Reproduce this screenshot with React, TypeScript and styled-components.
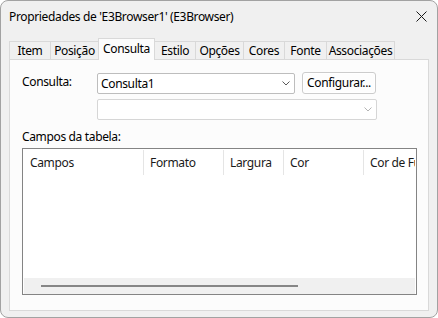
import React from "react";
import styled, { createGlobalStyle } from "styled-components";

const Global = createGlobalStyle`
  html, body { margin: 0; padding: 0; background: #ffffff; }
  body {
    font-family: "Noto Sans", "Open Sans", sans-serif;
    font-size: 12px;
    letter-spacing: -0.35px;
    color: #000;
  }
  * { box-sizing: border-box; }
`;

const Window = styled.div`
  width: 438px;
  height: 318px;
  border: 1px solid #a2a2a2;
  border-radius: 8px;
  background: #f0f0f0;
  display: flex;
  flex-direction: column;
  overflow: hidden;
`;

const TitleBar = styled.div`
  height: 31px;
  display: flex;
  align-items: center;
  justify-content: space-between;
  padding: 0 10px 0 8px;
`;

const Title = styled.span`
  font-size: 12px;
  line-height: 16px;
  white-space: nowrap;
`;

const CloseButton = styled.div`
  width: 11px;
  height: 11px;
  display: flex;
`;

const TabStrip = styled.div`
  padding: 6px 8px 0;
  height: 27px;
  display: flex;
  align-items: flex-end;
`;

const Tab = styled.div<{ $w: number; $active?: boolean }>`
  position: relative;
  width: ${(p) => p.$w}px;
  height: ${(p) => (p.$active ? 22 : 18)}px;
  margin-left: -1px;
  margin-bottom: ${(p) => (p.$active ? -1 : 0)}px;
  z-index: ${(p) => (p.$active ? 1 : 0)};
  border: 1px solid #d9d9d9;
  border-bottom: none;
  background: ${(p) => (p.$active ? "#fcfcfc" : "#f0f0f0")};
  display: flex;
  justify-content: center;
  padding-top: ${(p) => (p.$active ? 2 : 1)}px;
  line-height: 16px;
  white-space: nowrap;
  &:first-child { margin-left: 0; }
`;

const Panel = styled.div`
  flex: 1;
  margin: 0 8px 6px;
  border: 1px solid #d9d9d9;
  background: #fcfcfc;
  padding: 12px 12px 0;
  display: flex;
  flex-direction: column;
`;

const Row = styled.div<{ $indent?: number; $top?: number }>`
  display: flex;
  align-items: flex-start;
  padding-left: ${(p) => p.$indent ?? 0}px;
  margin-top: ${(p) => p.$top ?? 0}px;
`;

const Label = styled.div`
  width: 75px;
  margin-top: 2px;
  line-height: 16px;
`;

const Combo = styled.div<{ $w: number; $disabled?: boolean; $top?: number }>`
  width: ${(p) => p.$w}px;
  height: 21px;
  margin-top: ${(p) => p.$top ?? 0}px;
  border: 1px solid ${(p) => (p.$disabled ? "#d6d6d6" : "#bdbdbd")};
  border-radius: 2px;
  background: #ffffff;
  display: flex;
  align-items: center;
  justify-content: space-between;
  padding: 0 4px 0 3px;
  line-height: 16px;
`;

const Button = styled.div`
  width: 74px;
  height: 22px;
  margin-left: 7px;
  border: 1px solid #cccccc;
  border-radius: 3px;
  background: #fdfdfd;
  box-shadow: inset 0 0 0 1px #ffffff;
  display: flex;
  align-items: center;
  justify-content: center;
  line-height: 16px;
  white-space: nowrap;
`;

const Caption = styled.div`
  margin-top: 9px;
  line-height: 16px;
`;

const Table = styled.div`
  margin-top: 3px;
  width: 395px;
  height: 147px;
  border: 1px solid #848484;
  padding: 1px 1px 0;
  background: #ffffff;
  display: flex;
  flex-direction: column;
`;

const Header = styled.div`
  height: 25px;
  display: flex;
  overflow: hidden;
`;

const HeaderCell = styled.div<{ $w?: number }>`
  ${(p) => (p.$w ? `width: ${p.$w}px; flex: none;` : "flex: 1;")}
  border-right: ${(p) => (p.$w ? "1px solid #e5e5e5" : "none")};
  padding-left: 6px;
  display: flex;
  align-items: center;
  line-height: 16px;
  white-space: nowrap;
  overflow: hidden;
  color: #1a1a1a;
`;

const Body = styled.div`
  flex: 1;
`;

const ScrollBar = styled.div`
  height: 16px;
  background: #f0f0f0;
  display: flex;
  align-items: center;
`;

const Thumb = styled.div`
  margin-left: 17px;
  width: 257px;
  height: 2px;
  background: #868686;
`;

const Chevron = ({ color }: { color: string }) => (
  <svg width="8" height="5" viewBox="0 0 8 5">
    <path d="M0.5 0.5 L4 4 L7.5 0.5" fill="none" stroke={color} strokeWidth="1" />
  </svg>
);

const tabs = [
  { name: "Item", w: 42 },
  { name: "Posição", w: 49 },
  { name: "Consulta", w: 57, active: true },
  { name: "Estilo", w: 42 },
  { name: "Opções", w: 49 },
  { name: "Cores", w: 42 },
  { name: "Fonte", w: 43 },
  { name: "Associações", w: 69 },
];

const columns = [
  { name: "Campos", w: 120 },
  { name: "Formato", w: 80 },
  { name: "Largura", w: 60 },
  { name: "Cor", w: 80 },
  { name: "Cor de Fundo" },
];

export default function App() {
  return (
    <>
      <Global />
      <Window>
        <TitleBar>
          <Title>Propriedades de 'E3Browser1' (E3Browser)</Title>
          <CloseButton>
            <svg width="11" height="11" viewBox="0 0 11 11">
              <path d="M0.5 0.5 L10.5 10.5 M10.5 0.5 L0.5 10.5" stroke="#1a1a1a" strokeWidth="1" />
            </svg>
          </CloseButton>
        </TitleBar>
        <TabStrip>
          {tabs.map((t) => (
            <Tab key={t.name} $w={t.w} $active={t.active}>
              {t.name}
            </Tab>
          ))}
        </TabStrip>
        <Panel>
          <Row>
            <Label>Consulta:</Label>
            <Combo $w={198} $top={1}>
              <span>Consulta1</span>
              <Chevron color="#5a5a5a" />
            </Combo>
            <Button>Configurar...</Button>
          </Row>
          <Row $indent={75} $top={5}>
            <Combo $w={280} $disabled>
              <span />
              <Chevron color="#b4b4b4" />
            </Combo>
          </Row>
          <Caption>Campos da tabela:</Caption>
          <Table>
            <Header>
              {columns.map((c) => (
                <HeaderCell key={c.name} $w={c.w}>
                  {c.name}
                </HeaderCell>
              ))}
            </Header>
            <Body />
            <ScrollBar>
              <Thumb />
            </ScrollBar>
          </Table>
        </Panel>
      </Window>
    </>
  );
}
